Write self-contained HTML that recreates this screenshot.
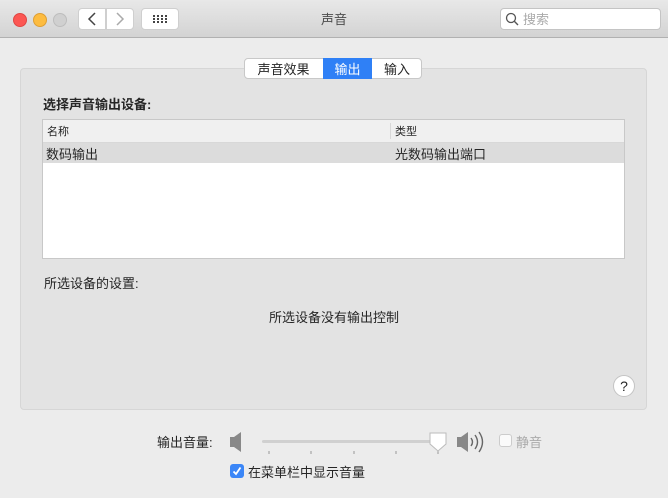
<!DOCTYPE html><html><head><meta charset="utf-8"><style>
body{margin:0;width:668px;height:498px;background:#ececec;font-family:"Liberation Sans","Noto Sans CJK SC",sans-serif;font-size:13px;color:#262626;position:relative;overflow:hidden}
.a{position:absolute}
.btn{background:#fff;border:1px solid #cfcfcf;border-radius:4px;box-sizing:border-box}
</style></head><body>
<div class="a" style="left:0;top:0;width:668px;height:37px;background:linear-gradient(#e8e8e8,#d3d3d3);border-bottom:1px solid #b1b1b1"></div>
<div class="a" style="left:13px;top:13px;width:12px;height:12px;border-radius:50%;background:#fc5753;border:.5px solid #df4744"></div>
<div class="a" style="left:33px;top:13px;width:12px;height:12px;border-radius:50%;background:#fdbc40;border:.5px solid #de9f34"></div>
<div class="a" style="left:53px;top:13px;width:12px;height:12px;border-radius:50%;background:#d0d0d0;border:.5px solid #bdbdbd"></div>
<div class="a btn" style="left:78px;top:8px;width:28px;height:22px;border-radius:4px 0 0 4px"></div>
<div class="a btn" style="left:106px;top:8px;width:28px;height:22px;border-radius:0 4px 4px 0"></div>
<svg class="a" style="left:78px;top:8px" width="56" height="22"><path d="M17 5L11 11L17 17" stroke="#444" stroke-width="1.5" fill="none"/><path d="M39 5L45 11L39 17" stroke="#aaa" stroke-width="1.5" fill="none"/></svg>
<div class="a btn" style="left:141px;top:8px;width:38px;height:22px"></div>
<svg class="a" style="left:141px;top:8px" width="38" height="22"><g fill="#444"><rect x="12" y="7" width="2" height="2"/><rect x="16" y="7" width="2" height="2"/><rect x="20" y="7" width="2" height="2"/><rect x="24" y="7" width="2" height="2"/><rect x="12" y="10" width="2" height="2"/><rect x="16" y="10" width="2" height="2"/><rect x="20" y="10" width="2" height="2"/><rect x="24" y="10" width="2" height="2"/><rect x="12" y="13" width="2" height="2"/><rect x="16" y="13" width="2" height="2"/><rect x="20" y="13" width="2" height="2"/><rect x="24" y="13" width="2" height="2"/></g></svg>
<div class="a" style="left:0;width:668px;top:9px;text-align:center;color:#4d4d4d">声音</div>
<div class="a btn" style="left:500px;top:8px;width:161px;height:22px;border-color:#c4c4c4"></div>
<svg class="a" style="left:504px;top:11px" width="16" height="16"><circle cx="7" cy="7" r="4.5" stroke="#555" stroke-width="1.3" fill="none"/><path d="M10.3 10.3L14 14" stroke="#555" stroke-width="1.4"/></svg>
<div class="a" style="left:523px;top:9px;color:#aaa">搜索</div>
<div class="a" style="left:20px;top:68px;width:627px;height:342px;background:#e3e3e3;border:1px solid #d6d6d6;border-radius:4px;box-sizing:border-box"></div>
<div class="a btn" style="left:244px;top:58px;width:178px;height:21px;border-color:#c8c8c8"></div>
<div class="a" style="left:323px;top:58px;width:49px;height:21px;background:#2f80f6"></div>
<div class="a" style="left:244px;top:59px;width:79px;text-align:center">声音效果</div>
<div class="a" style="left:323px;top:59px;width:49px;text-align:center;color:#fff">输出</div>
<div class="a" style="left:372px;top:59px;width:50px;text-align:center">输入</div>
<div class="a" style="left:43px;top:94px;font-weight:bold">选择声音输出设备:</div>
<div class="a" style="left:42px;top:119px;width:583px;height:140px;background:#fff;border:1px solid #c8c8c8;box-sizing:border-box"></div>
<div class="a" style="left:43px;top:120px;width:581px;height:22px;background:#f0f0f0;border-bottom:1px solid #d8d8d8"></div>
<div class="a" style="left:390px;top:123px;width:1px;height:16px;background:#d8d8d8"></div>
<div class="a" style="left:47px;top:123px;font-size:11px">名称</div>
<div class="a" style="left:395px;top:123px;font-size:11px">类型</div>
<div class="a" style="left:43px;top:143px;width:581px;height:20px;background:#dcdcdc"></div>
<div class="a" style="left:46px;top:144px">数码输出</div>
<div class="a" style="left:395px;top:144px">光数码输出端口</div>
<div class="a" style="left:44px;top:273px">所选设备的设置:</div>
<div class="a" style="left:0;width:668px;top:307px;text-align:center">所选设备没有输出控制</div>
<div class="a" style="left:613px;top:375px;width:22px;height:22px;border-radius:50%;background:#fff;border:1px solid #c4c4c4;box-sizing:border-box;text-align:center;line-height:20px;font-size:14px">?</div>
<div class="a" style="left:157px;top:432px">输出音量:</div>
<svg class="a" style="left:228px;top:430px" width="262" height="26"><path d="M2 7H6L13 2V22L6 17H2Z" fill="#888"/><rect x="34" y="10" width="176" height="3" rx="1.5" fill="#d0d0d0"/><g stroke="#999" stroke-width="1"><path d="M41 21V24M83 21V24M126 21V24M168 21V24M210 21V24"/></g><path d="M202 3H218V14L210 21L202 14Z" fill="#fff" stroke="#bbb"/><path d="M229 7H233L240 2V22L233 17H229Z" fill="#888"/><path d="M243 8Q246 12 243 16M247 5Q252 12 247 19M251 2Q258 12 251 22" stroke="#666" stroke-width="1.4" fill="none"/></svg>
<div class="a" style="left:499px;top:434px;width:13px;height:13px;border:1px solid #ccc;border-radius:3px;background:#fafafa;box-sizing:border-box"></div>
<div class="a" style="left:516px;top:432px;color:#aaa">静音</div>
<div class="a" style="left:230px;top:464px;width:14px;height:14px;border-radius:3px;background:#3b86f7"></div>
<svg class="a" style="left:230px;top:464px" width="14" height="14"><path d="M3.5 7.5L6 10L10.5 3.5" stroke="#fff" stroke-width="1.8" fill="none"/></svg>
<div class="a" style="left:248px;top:462px">在菜单栏中显示音量</div>
</body></html>
